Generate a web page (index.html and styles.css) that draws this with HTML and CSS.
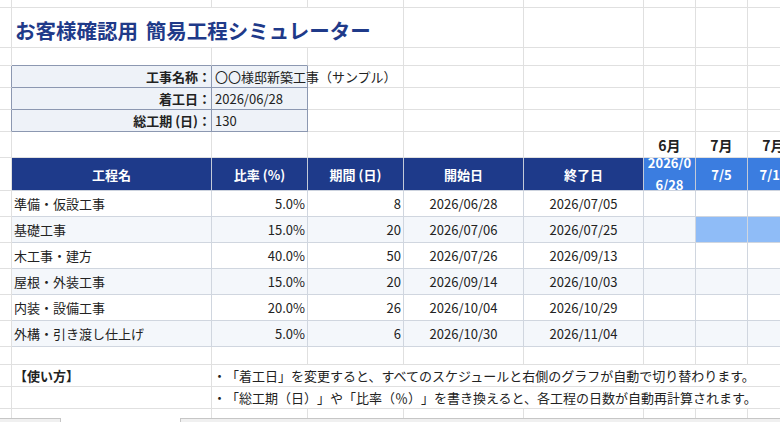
FILE: index.html
```html
<!DOCTYPE html>
<html lang="ja">
<head>
<meta charset="utf-8">
<title>お客様確認用 簡易工程シミュレーター</title>
<link rel="stylesheet" href="styles.css">
</head>
<body>
<div class="window">
  <div class="sheet">
    <!-- row 1 -->
    <div class="c"></div><div class="c"></div><div class="c"></div><div class="c"></div><div class="c"></div><div class="c"></div><div class="c"></div><div class="c"></div><div class="c"></div>
    <!-- row 2 title -->
    <div class="c"></div>
    <div class="c title span3">お客様確認用 簡易工程シミュレーター</div>
    <div class="c"></div><div class="c"></div><div class="c"></div><div class="c"></div><div class="c"></div>
    <!-- row 3 -->
    <div class="c"></div><div class="c ibt"></div><div class="c ibt"></div><div class="c"></div><div class="c"></div><div class="c"></div><div class="c"></div><div class="c"></div><div class="c"></div>
    <!-- row 4 -->
    <div class="c ibl"></div>
    <div class="c ib label">工事名称：</div>
    <div class="c ib value">〇〇様邸新築工事（サンプル）</div>
    <div class="c"></div><div class="c"></div><div class="c"></div><div class="c"></div><div class="c"></div><div class="c"></div>
    <!-- row 5 -->
    <div class="c ibl"></div>
    <div class="c ib label">着工日：</div>
    <div class="c ib value">2026/06/28</div>
    <div class="c"></div><div class="c"></div><div class="c"></div><div class="c"></div><div class="c"></div><div class="c"></div>
    <!-- row 6 -->
    <div class="c ibl"></div>
    <div class="c ib label">総工期 (日)：</div>
    <div class="c ib value">130</div>
    <div class="c"></div><div class="c"></div><div class="c"></div><div class="c"></div><div class="c"></div><div class="c"></div>
    <!-- row 7 months -->
    <div class="c"></div><div class="c"></div><div class="c"></div><div class="c"></div><div class="c"></div><div class="c"></div>
    <div class="c mon">6月</div><div class="c mon">7月</div><div class="c mon">7月</div>
    <!-- row 8 header -->
    <div class="c"></div>
    <div class="c th">工程名</div>
    <div class="c th">比率 (%)</div>
    <div class="c th">期間 (日)</div>
    <div class="c th">開始日</div>
    <div class="c th">終了日</div>
    <div class="c gh wrap"><span>2026/06/28</span></div>
    <div class="c gh">7/5</div>
    <div class="c gh">7/12</div>
    <!-- data rows -->
    <div class="c"></div>
    <div class="c td name">準備・仮設工事</div><div class="c td num">5.0%</div><div class="c td num">8</div><div class="c td ctr">2026/06/28</div><div class="c td ctr">2026/07/05</div>
    <div class="c td"></div><div class="c td"></div><div class="c td"></div>

    <div class="c"></div>
    <div class="c td alt name">基礎工事</div><div class="c td alt num">15.0%</div><div class="c td alt num">20</div><div class="c td alt ctr">2026/07/06</div><div class="c td alt ctr">2026/07/25</div>
    <div class="c td alt"></div><div class="c td bar"></div><div class="c td bar"></div>

    <div class="c"></div>
    <div class="c td name">木工事・建方</div><div class="c td num">40.0%</div><div class="c td num">50</div><div class="c td ctr">2026/07/26</div><div class="c td ctr">2026/09/13</div>
    <div class="c td"></div><div class="c td"></div><div class="c td"></div>

    <div class="c"></div>
    <div class="c td alt name">屋根・外装工事</div><div class="c td alt num">15.0%</div><div class="c td alt num">20</div><div class="c td alt ctr">2026/09/14</div><div class="c td alt ctr">2026/10/03</div>
    <div class="c td alt"></div><div class="c td alt"></div><div class="c td alt"></div>

    <div class="c"></div>
    <div class="c td name">内装・設備工事</div><div class="c td num">20.0%</div><div class="c td num">26</div><div class="c td ctr">2026/10/04</div><div class="c td ctr">2026/10/29</div>
    <div class="c td"></div><div class="c td"></div><div class="c td"></div>

    <div class="c"></div>
    <div class="c td alt name">外構・引き渡し仕上げ</div><div class="c td alt num">5.0%</div><div class="c td alt num">6</div><div class="c td alt ctr">2026/10/30</div><div class="c td alt ctr">2026/11/04</div>
    <div class="c td alt"></div><div class="c td alt"></div><div class="c td alt"></div>
    <!-- row 15 -->
    <div class="c"></div><div class="c"></div><div class="c"></div><div class="c"></div><div class="c"></div><div class="c"></div><div class="c"></div><div class="c"></div><div class="c"></div>
    <!-- row 16 usage -->
    <div class="c"></div>
    <div class="c howto">【使い方】</div>
    <div class="c note span7">・「着工日」を変更すると、すべてのスケジュールと右側のグラフが自動で切り替わります。</div>
    <!-- row 17 -->
    <div class="c"></div>
    <div class="c"></div>
    <div class="c note span7">・「総工期（日）」や「比率（％）」を書き換えると、各工程の日数が自動再計算されます。</div>
    <!-- row 18 -->
    <div class="c nb"></div><div class="c nb"></div><div class="c nb"></div><div class="c nb"></div><div class="c nb"></div><div class="c nb"></div><div class="c nb"></div><div class="c nb"></div><div class="c nb"></div>
  </div>
  <div class="tabs">
    <div class="tab-l"></div>
    <div class="tab-gap"></div>
    <div class="tab-r"></div>
  </div>
</div>
</body>
</html>
```

FILE: styles.css
```css
html, body {
  margin: 0;
  padding: 0;
  background: #ffffff;
}

body {
  width: 780px;
  height: 422px;
  overflow: hidden;
  font-family: "Noto Sans CJK JP", "Noto Sans", sans-serif;
  font-size: 13px;
  color: #222222;
  text-spacing-trim: space-all;
}

.window {
  display: flex;
  flex-direction: column;
  width: 780px;
  height: 422px;
  overflow: hidden;
}

.sheet {
  flex: none;
  display: grid;
  width: 800px;
  grid-template-columns: 12px 200px 96px 96px 120px 120px 52px 52px 52px;
  grid-template-rows: 8px 40px 18px 22px 22px 22px 26px 33px 26px 26px 26px 26px 26px 26px 18px 22px 22px 9px;
}

.c {
  box-sizing: border-box;
  border-right: 1px solid #e0e0e0;
  border-bottom: 1px solid #e0e0e0;
  display: flex;
  align-items: center;
  white-space: nowrap;
  min-width: 0;
}

.nb {
  border-bottom: none;
}

.span3 {
  grid-column: span 3;
}

.span7 {
  grid-column: span 7;
}

/* title */
.title {
  padding: 5px 0 0 3px;
  font-size: 20.5px;
  word-spacing: 3px;
  font-weight: 700;
  color: #1f3a89;
}

/* info box */
.ibt {
  border-bottom-color: #8c98b1;
}

.ibl {
  border-right-color: #8c98b1;
}

.ib {
  background: #eef2f8;
  border-right-color: #8c98b1;
  border-bottom-color: #8c98b1;
}

.label {
  justify-content: flex-end;
  font-weight: 700;
}

.value {
  padding-left: 3px;
}

/* months */
.mon {
  justify-content: center;
  font-size: 14px;
  font-weight: 700;
  color: #222222;
}

/* table header */
.th {
  justify-content: center;
  background: #1e3a8a;
  color: #ffffff;
  font-weight: 700;
  border-right-color: #c3cad8;
  border-bottom-color: #cdd3de;
}

.gh {
  justify-content: center;
  background: #3b7de0;
  color: #ffffff;
  font-weight: 700;
  border-right-color: #c3cad8;
  border-bottom-color: #cdd3de;
  overflow: hidden;
}

.wrap {
  white-space: normal;
  word-break: break-all;
  text-align: center;
  line-height: 22px;
  padding: 0 3px;
}

/* data rows */
.td {
  border-right-color: #d0d6df;
  border-bottom-color: #d0d6df;
}

.alt {
  background: #f4f7fb;
}

.bar {
  background: #8fbcf7;
}

.name {
  padding-left: 2px;
}

.num {
  justify-content: flex-end;
  padding-right: 2px;
}

.ctr {
  justify-content: center;
}

/* usage */
.howto {
  padding-left: 2px;
  font-weight: 700;
}

.note {
  padding-left: 1px;
}

/* sheet tabs strip */
.tabs {
  flex: 1;
  display: flex;
}

.tab-l {
  box-sizing: border-box;
  width: 61px;
  border-top: 1px solid #c6c6c6;
  border-right: 1px solid #c6c6c6;
  background: #f0f0f0;
}

.tab-gap {
  width: 119px;
}

.tab-r {
  box-sizing: border-box;
  flex: 1;
  border-top: 1px solid #c6c6c6;
  border-left: 1px solid #c6c6c6;
  background: #f0f0f0;
}
```
